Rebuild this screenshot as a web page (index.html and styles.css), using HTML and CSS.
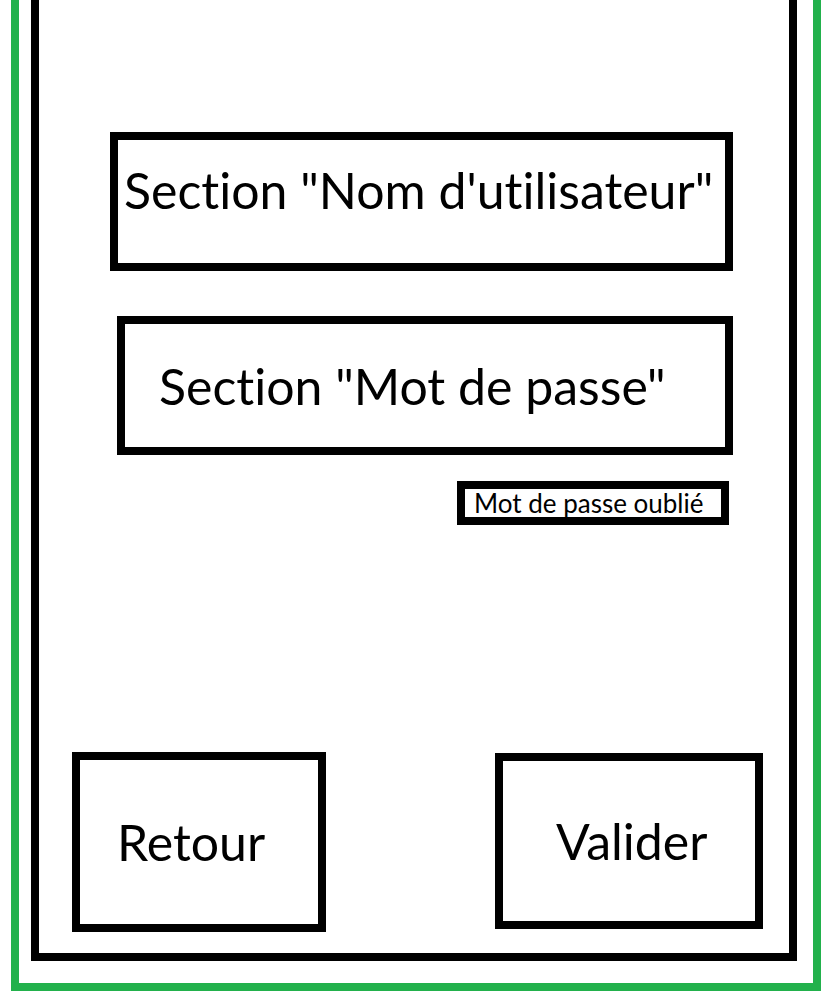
FILE: index.html
```html
<!DOCTYPE html>
<html lang="fr">
<head>
    <meta charset="UTF-8">
    <meta name="viewport" content="width=device-width, initial-scale=1.0">
    <title>Connexion</title>
    <link rel="stylesheet" href="styles.css">
</head>
<body>

<div class="phone">
    <div class="screen">
        <div class="field field-user">Section "Nom d'utilisateur"</div>
        <div class="field field-pass">Section "Mot de passe"</div>
        <div class="forgot">Mot de passe oublié</div>
        <div class="actions">
            <div class="btn btn-back">Retour</div>
            <div class="btn btn-ok">Valider</div>
        </div>
    </div>
</div>

</body>
</html>
```

FILE: styles.css
```css
body {
    font-family: Lato, "Open Sans", sans-serif;
    font-variant-ligatures: none;
    background-color: #fff;
    color: #000;
    margin: 0;
}
.phone {
    box-sizing: border-box;
    width: 810px;
    height: 991px;
    margin-left: 11px;
    padding: 0 16px 22px 12px;
    border: 8px solid #22b14c;
    border-top: none;
}
.screen {
    box-sizing: border-box;
    height: 961px;
    border: 8px solid #000;
    border-top: none;
    padding-top: 132px;
}
.field {
    box-sizing: border-box;
    display: flex;
    align-items: center;
    height: 139px;
    border: 8px solid #000;
    font-size: 50px;
    white-space: nowrap;
}
.field-user {
    width: 623px;
    margin-left: 71px;
    padding-left: 6px;
    padding-bottom: 24px;
}
.field-pass {
    width: 616px;
    margin-top: 45px;
    margin-left: 78px;
    padding-left: 34px;
}
.forgot {
    box-sizing: border-box;
    display: flex;
    align-items: center;
    width: 272px;
    height: 44px;
    margin-top: 26px;
    margin-left: 418px;
    padding-left: 9px;
    border: 8px solid #000;
    font-size: 26px;
    white-space: nowrap;
}
.actions {
    display: flex;
    align-items: flex-start;
    margin-top: 227px;
    margin-left: 33px;
}
.btn {
    box-sizing: border-box;
    display: flex;
    align-items: center;
    border: 8px solid #000;
    font-size: 50px;
}
.btn-back {
    width: 254px;
    height: 180px;
    padding-left: 37px;
}
.btn-ok {
    width: 268px;
    height: 176px;
    margin-top: 1px;
    margin-left: 169px;
    padding-left: 53px;
}
```
